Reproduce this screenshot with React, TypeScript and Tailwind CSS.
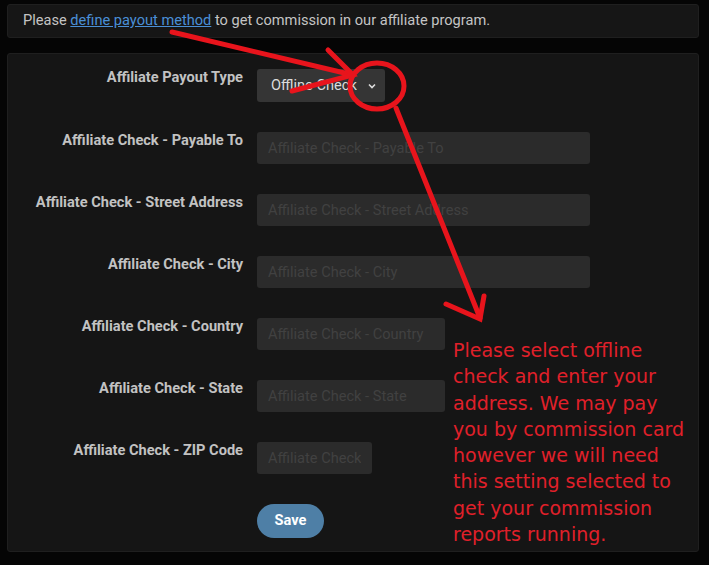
import React from "react";

const fields = [
  { label: "Affiliate Check - Payable To", placeholder: "Affiliate Check - Payable To", width: "w-[333px]" },
  { label: "Affiliate Check - Street Address", placeholder: "Affiliate Check - Street Address", width: "w-[333px]" },
  { label: "Affiliate Check - City", placeholder: "Affiliate Check - City", width: "w-[333px]" },
  { label: "Affiliate Check - Country", placeholder: "Affiliate Check - Country", width: "w-[188px]" },
  { label: "Affiliate Check - State", placeholder: "Affiliate Check - State", width: "w-[188px]" },
  { label: "Affiliate Check - ZIP Code", placeholder: "Affiliate Check - ZIP Code", width: "w-[115px]" },
];

// red markup drawn over the screenshot
const Annotations = () => (
  <svg
    className="absolute left-0 top-0 pointer-events-none"
    width="709"
    height="565"
    viewBox="0 0 709 565"
  >
    <g stroke="#e8141c" strokeWidth="5" strokeLinecap="round" fill="none">
      <path d="M172 32 L353 75" />
      <path d="M328 50 L353 75 L292 91" />
      <ellipse cx="377" cy="86" rx="27" ry="23" />
      <path d="M396 108 L480 318" />
      <path d="M446 304 L480 319 L484 296" />
    </g>
  </svg>
);

const App = () => {
  return (
    <div className="relative w-[709px] h-[565px] bg-[#050505] overflow-hidden font-['Roboto',sans-serif]">
      <div className="flex flex-col pt-[4px] pl-[7px]">
        <div className="w-[692px] h-[34px] flex items-center px-[15px] bg-[#161616] rounded-[3px] border border-[#1f1f1f] text-[14.6px] text-[#c4c4c4]">
          <span>
            Please{" "}
            <a href="#" className="text-[#4a8fd6] underline">
              define payout method
            </a>{" "}
            to get commission in our affiliate program.
          </span>
        </div>

        <div className="w-[692px] mt-[15px] h-[499px] bg-[#151515] rounded-[3px] border border-[#1f1f1f] pt-[15px]">
          <div className="flex flex-col gap-[30px]">
            <div className="flex items-start">
              <div className="w-[235px] leading-[17px] text-right text-[14.6px] font-bold text-[#c2c2c2]">
                Affiliate Payout Type
              </div>
              <div className="ml-[14px] w-[128px] h-[33px] flex items-center justify-between pl-[14px] pr-[8px] bg-[#353535] rounded-[3px] text-[14.6px] text-[#dcdcdc]">
                <span className="whitespace-nowrap overflow-hidden">Offline Check</span>
                <svg width="10" height="10" viewBox="0 0 10 10" className="shrink-0">
                  <path d="M2 3.5 L5 6.5 L8 3.5" stroke="#dcdcdc" strokeWidth="1.6" fill="none" />
                </svg>
              </div>
            </div>

            {fields.map((f) => (
              <div className="flex items-start" key={f.label}>
                <div className="w-[235px] leading-[17px] text-right text-[14.6px] font-bold text-[#c2c2c2] whitespace-nowrap">
                  {f.label}
                </div>
                <input
                  className={`ml-[14px] ${f.width} h-[32px] px-[11px] bg-[#2b2b2b] rounded-[3px] text-[14.6px] text-[#ddd] placeholder-[#414141] outline-none`}
                  placeholder={f.placeholder}
                />
              </div>
            ))}

            <div className="flex">
              <div className="w-[235px]" />
              <button className="ml-[14px] w-[67px] h-[34px] rounded-full bg-[#4e7fa6] text-white text-[14.6px] font-bold">
                Save
              </button>
            </div>
          </div>
        </div>
      </div>

      <div className="absolute left-[453px] top-[337px] w-[245px] text-[19px] leading-[26.3px] text-[#e0202a] font-['DejaVu_Sans',sans-serif]">
        Please select offline check and enter your address. We may pay you by commission card however we will need this setting selected to get your commission reports running.
      </div>

      <Annotations />
    </div>
  );
};

export default App;
